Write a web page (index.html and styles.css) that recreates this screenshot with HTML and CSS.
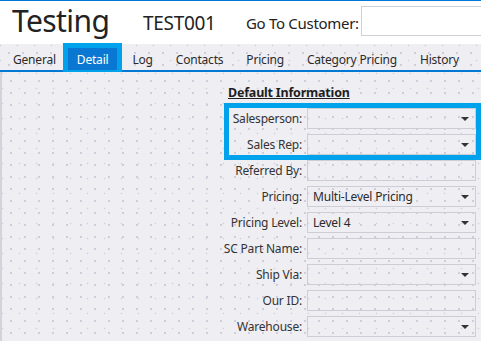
FILE: index.html
```html
<!DOCTYPE html>
<html lang="en">
<head>
  <meta charset="UTF-8">
  <meta name="viewport" content="width=device-width, initial-scale=1.0">
  <title>Customer - Testing</title>
  <link rel="stylesheet" href="styles.css">
</head>
<body>

<div class="window">
  <!-- Header: customer name, code and quick jump -->
  <div class="header">
    <div class="cust-name">Testing</div>
    <div class="cust-code">TEST001</div>
    <label class="goto-label" for="gotoCustomer">Go To Customer:</label>
    <input type="text" id="gotoCustomer" class="goto-input">
  </div>

  <!-- Tab strip -->
  <div class="tabs">
    <div class="tab">General</div>
    <div class="tab selected">Detail</div>
    <div class="tab">Log</div>
    <div class="tab">Contacts</div>
    <div class="tab">Pricing</div>
    <div class="tab">Category Pricing</div>
    <div class="tab">History</div>
  </div>

  <!-- Detail page -->
  <div class="content">
    <div class="form">
      <div class="section-title">Default Information</div>

      <div class="highlight">
        <div class="row">
          <span class="label">Salesperson:</span>
          <div class="field select"><span></span><span class="arrow"></span></div>
        </div>
        <div class="row">
          <span class="label">Sales Rep:</span>
          <div class="field select"><span></span><span class="arrow"></span></div>
        </div>
      </div>

      <div class="row">
        <span class="label">Referred By:</span>
        <div class="field"></div>
      </div>
      <div class="row">
        <span class="label">Pricing:</span>
        <div class="field select"><span>Multi-Level Pricing</span><span class="arrow"></span></div>
      </div>
      <div class="row">
        <span class="label">Pricing Level:</span>
        <div class="field select"><span>Level 4</span><span class="arrow"></span></div>
      </div>
      <div class="row">
        <span class="label">SC Part Name:</span>
        <div class="field"></div>
      </div>
      <div class="row">
        <span class="label">Ship Via:</span>
        <div class="field select"><span></span><span class="arrow"></span></div>
      </div>
      <div class="row">
        <span class="label">Our ID:</span>
        <div class="field"></div>
      </div>
      <div class="row">
        <span class="label">Warehouse:</span>
        <div class="field select"><span></span><span class="arrow"></span></div>
      </div>
    </div>
  </div>
</div>

</body>
</html>
```

FILE: styles.css
```css
body {
  margin: 0;
  padding: 0;
  font-family: "Noto Sans", "Open Sans", sans-serif;
  color: #2b2b2b;
  background-color: #fff;
  overflow: hidden;
}
.window {
  width: 481px;
  height: 341px;
  display: flex;
  flex-direction: column;
  border-top: 1px solid #0078d4;
  box-sizing: border-box;
}

/* header */
.header {
  height: 43px;
  display: flex;
  align-items: center;
  background-color: #fff;
  flex-shrink: 0;
  white-space: nowrap;
}
.cust-name {
  font-size: 30px;
  letter-spacing: -0.6px;
  margin-left: 12px;
  width: 131px;
  flex-shrink: 0;
  color: #222;
  line-height: 1;
  margin-top: -3px;
}
.cust-code {
  font-size: 19px;
  letter-spacing: -0.3px;
  width: 103px;
  flex-shrink: 0;
  color: #222;
}
.goto-label {
  font-size: 15px;
  letter-spacing: -0.3px;
  width: 115px;
  flex-shrink: 0;
  color: #222;
}
.goto-input {
  flex-grow: 1;
  min-width: 0;
  height: 30px;
  margin-right: -10px;
  border: 1px solid #cfcfd6;
  box-sizing: border-box;
  margin-top: -4px;
}

/* tabs */
.tabs {
  height: 28px;
  display: flex;
  align-items: flex-end;
  padding-left: 5px;
  border-bottom: 2px solid #0078d4;
  box-sizing: border-box;
  flex-shrink: 0;
  white-space: nowrap;
}
.tab {
  font-size: 12px;
  letter-spacing: -0.2px;
  height: 22px;
  line-height: 24px;
  padding: 0 8px;
  margin-right: 7px;
  color: #2b2b2b;
}
.tab.selected {
  background-color: #0a78d2;
  color: #fff;
  outline: 5px solid #00a2ec;
  margin-left: -3px;
  padding: 0 9px;
}

.tabs,
.content {
  background-color: #efeef3;
  background-image:
    radial-gradient(circle, #cdccdb 0.7px, transparent 1.1px),
    radial-gradient(circle, #d3d2df 0.7px, transparent 1.1px);
  background-size: 14px 12px, 17px 15px;
  background-position: 2px 3px, 9px 9px;
}

/* detail page */
.content {
  flex-grow: 1;
  display: flex;
  justify-content: flex-end;
  border-left: 2px solid #d3d3db;
}
.form {
  width: 290px;
  padding-right: 5px;
  display: flex;
  flex-direction: column;
  gap: 5px;
}
.section-title {
  font-size: 12.5px;
  letter-spacing: -0.2px;
  font-weight: bold;
  text-decoration: underline;
  margin-left: 42px;
  margin-top: 12px;
  margin-bottom: 2px;
  color: #1e1e1e;
}
.highlight {
  margin-left: 43px;
  display: flex;
  flex-direction: column;
  gap: 5px;
  outline: 5px solid #00a2ec;
}
.row {
  display: flex;
  align-items: center;
  justify-content: flex-end;
  height: 21px;
  white-space: nowrap;
}
.label {
  font-size: 12px;
  letter-spacing: -0.2px;
  margin-right: 5px;
  color: #333;
}
.field {
  width: 169px;
  height: 21px;
  border: 1px solid #cdcdd5;
  box-sizing: border-box;
  font-size: 12px;
  letter-spacing: -0.2px;
  padding: 0 5px;
  display: flex;
  align-items: center;
  justify-content: space-between;
  color: #2b2b2b;
}
.arrow {
  width: 0;
  height: 0;
  border-left: 4px solid transparent;
  border-right: 4px solid transparent;
  border-top: 4px solid #333;
  margin-right: 1px;
}
```
